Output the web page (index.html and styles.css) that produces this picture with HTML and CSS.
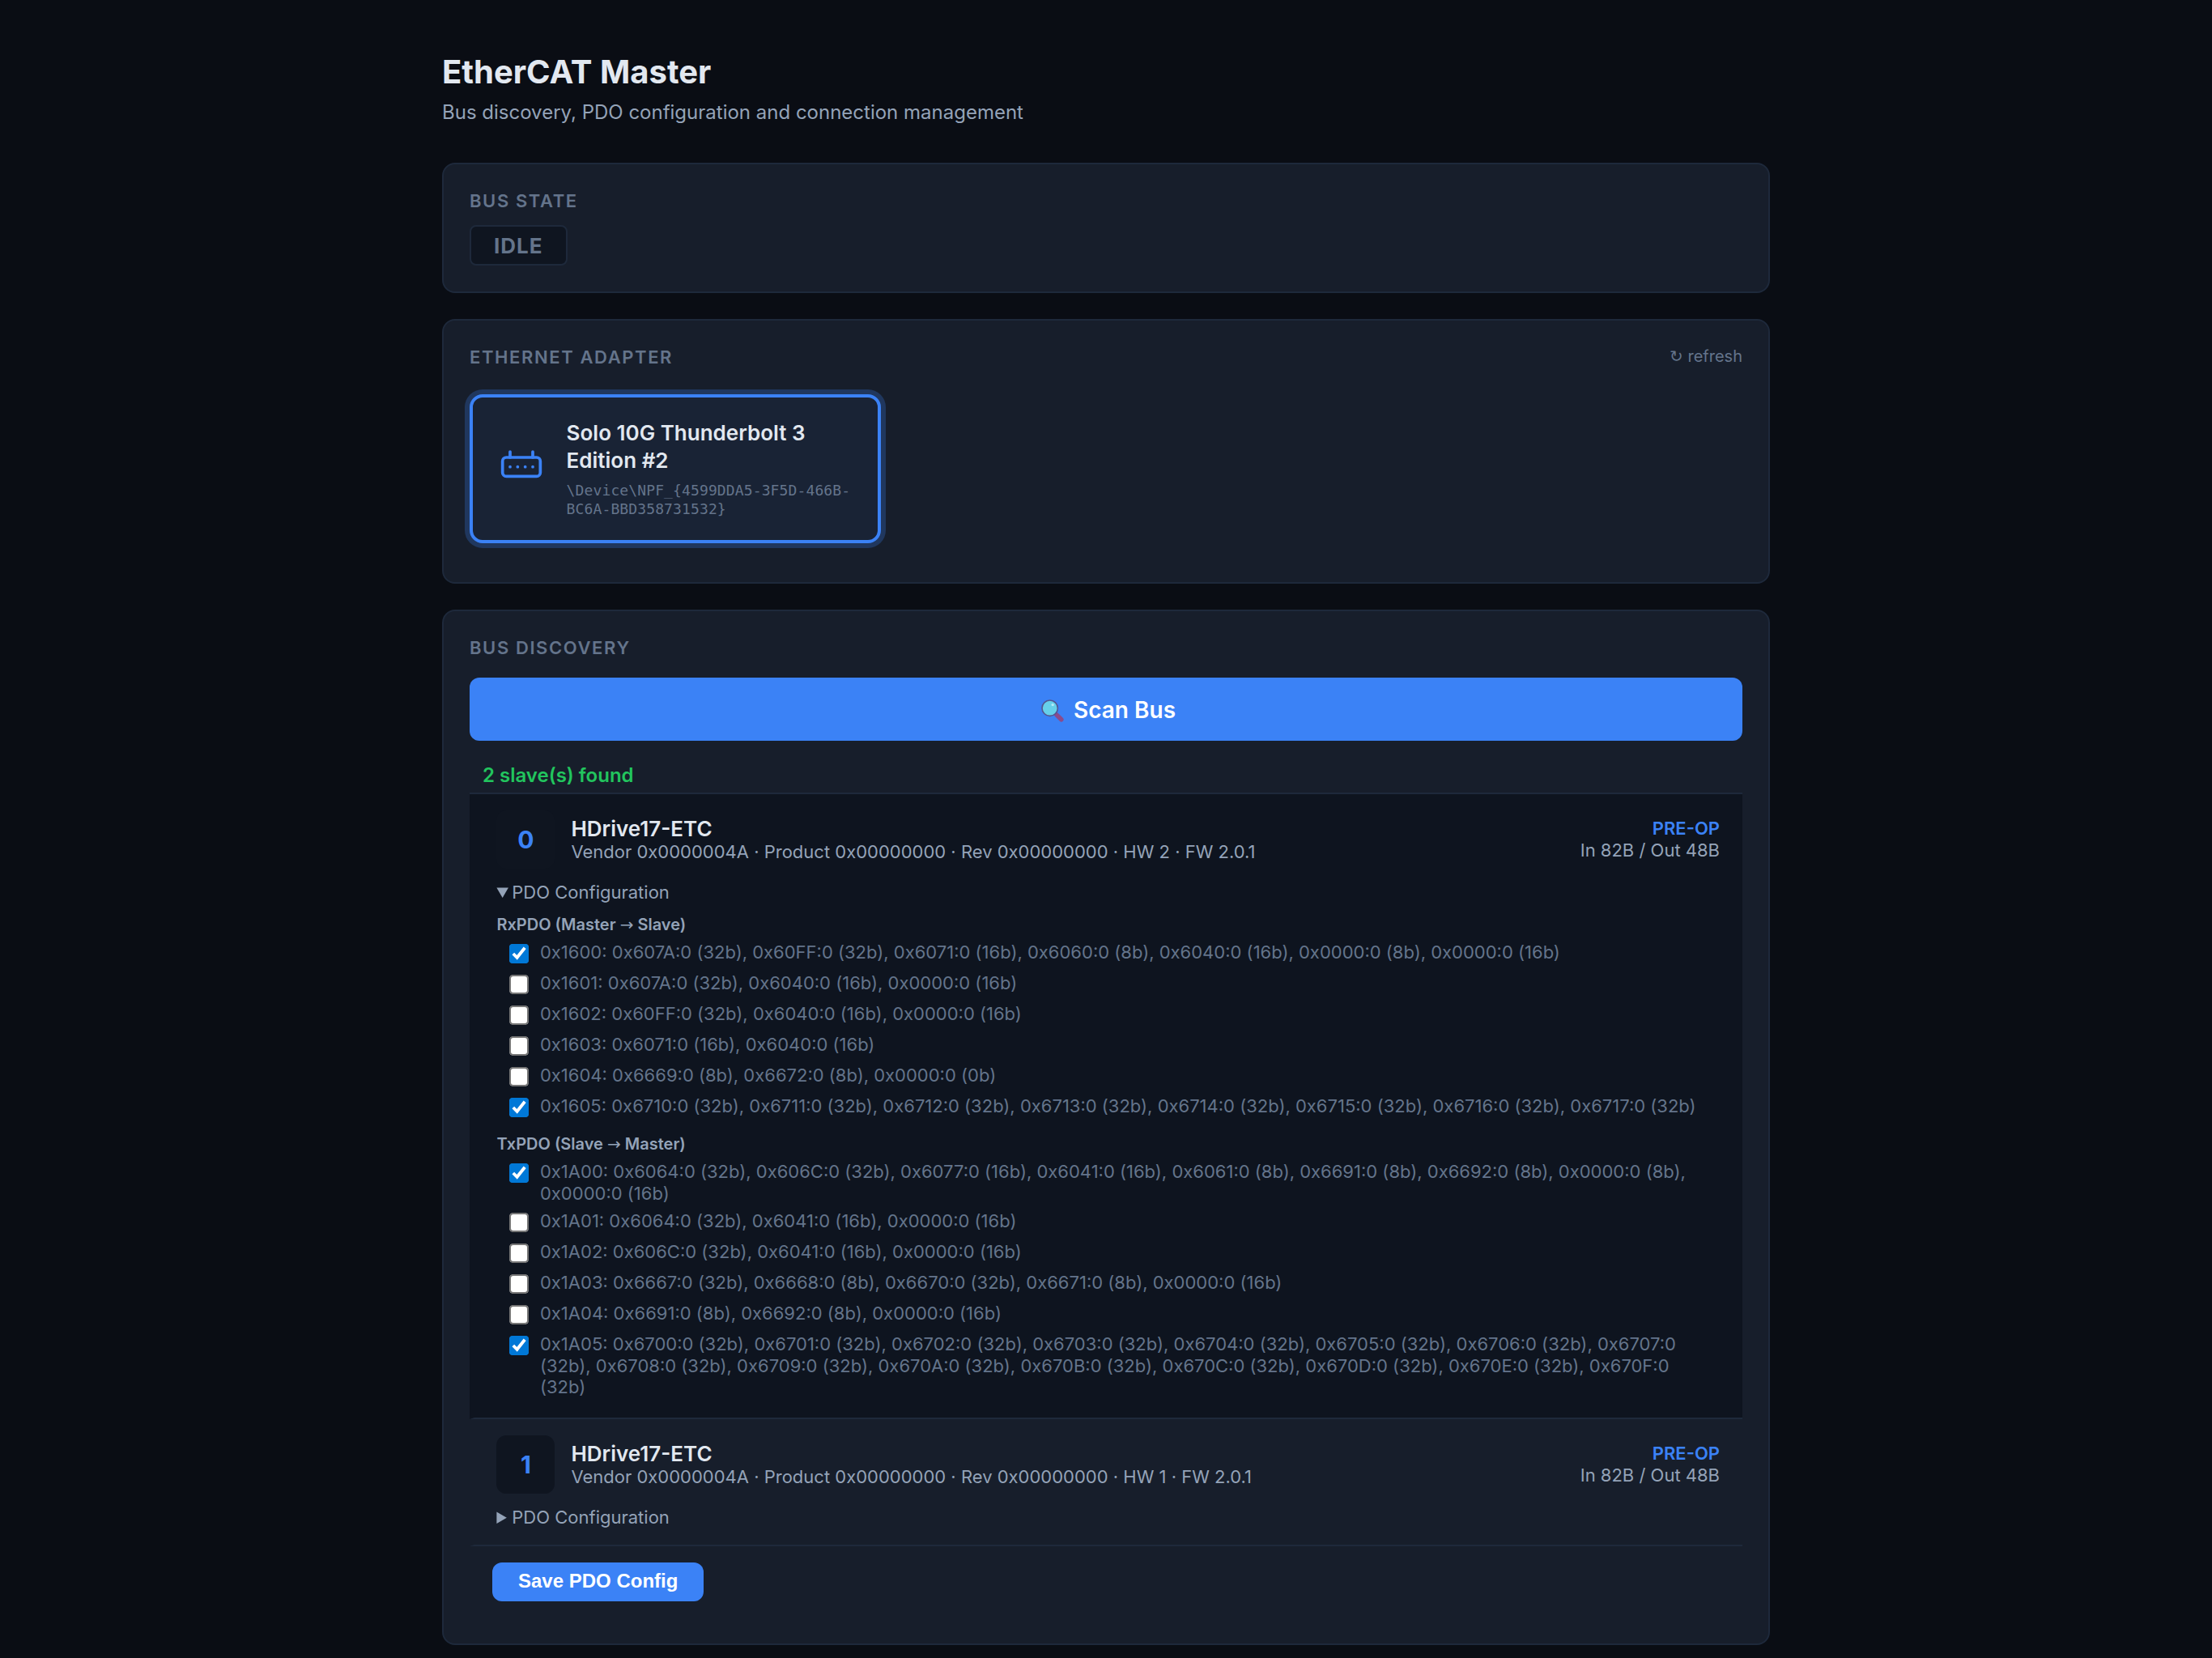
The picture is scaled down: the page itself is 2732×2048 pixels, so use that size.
FILE: index.html
```html
<!DOCTYPE html>
<html lang="en">
<head>
  <meta charset="UTF-8">
  <title>EtherCAT Master</title>
  <link rel="stylesheet" href="styles.css">
</head>
<body>

<div class="container">
  <header class="header">
    <h1>EtherCAT Master</h1>
    <p class="subtitle">Bus discovery, PDO configuration and connection management</p>
  </header>

  <section class="card">
    <div class="card-title">Bus State</div>
    <span class="state-badge">IDLE</span>
  </section>

  <section class="card">
    <div class="card-head">
      <div class="card-title">Ethernet Adapter</div>
      <button class="refresh-btn"><span class="sym">↻</span> refresh</button>
    </div>
    <div class="adapter-grid">
      <div class="adapter selected">
        <svg class="adapter-icon" viewBox="0 0 24 24" fill="none" stroke="currentColor" stroke-width="1.6" stroke-linecap="round" stroke-linejoin="round">
          <rect x="2" y="6" width="20" height="10" rx="2"/>
          <path d="M6 6V3M18 6V3M6 11h.01M10 11h.01M14 11h.01M18 11h.01"/>
        </svg>
        <div class="adapter-info">
          <div class="adapter-name">Solo 10G Thunderbolt 3 Edition #2</div>
          <div class="adapter-dev">\Device\NPF_{4599DDA5-3F5D-466B-BC6A-BBD358731532}</div>
        </div>
      </div>
    </div>
  </section>

  <section class="card">
    <div class="card-title">Bus Discovery</div>
    <button class="scan-btn">
      <svg class="scan-icon" viewBox="0 0 28 28">
        <path d="M19 19L24.8 24.8" stroke="#8a4b8c" stroke-width="5.6" stroke-linecap="round"/>
        <circle cx="10.7" cy="10.7" r="9.7" fill="#66d0ea" stroke="#54568f" stroke-width="1.6"/>
        <circle cx="14.2" cy="6.6" r="1.7" fill="#b5ecf7"/>
      </svg>
      <span>Scan Bus</span>
    </button>

    <div class="found">2 slave(s) found</div>

    <div class="slave active">
      <div class="slave-row">
        <div class="slave-idx">0</div>
        <div class="slave-info">
          <div class="slave-name">HDrive17-ETC</div>
          <div class="slave-meta">Vendor 0x0000004A · Product 0x00000000 · Rev 0x00000000 · HW 2 · FW 2.0.1</div>
        </div>
        <div class="slave-right">
          <div class="slave-state">PRE-OP</div>
          <div>In 82B / Out 48B</div>
        </div>
      </div>
      <details class="pdo" open>
        <summary>PDO Configuration</summary>
        <div class="pdo-title">RxPDO (Master <span class="sym">→</span> Slave)</div>
        <label class="pdo-item"><input type="checkbox" checked><span>0x1600: 0x607A:0 (32b), 0x60FF:0 (32b), 0x6071:0 (16b), 0x6060:0 (8b), 0x6040:0 (16b), 0x0000:0 (8b), 0x0000:0 (16b)</span></label>
        <label class="pdo-item"><input type="checkbox"><span>0x1601: 0x607A:0 (32b), 0x6040:0 (16b), 0x0000:0 (16b)</span></label>
        <label class="pdo-item"><input type="checkbox"><span>0x1602: 0x60FF:0 (32b), 0x6040:0 (16b), 0x0000:0 (16b)</span></label>
        <label class="pdo-item"><input type="checkbox"><span>0x1603: 0x6071:0 (16b), 0x6040:0 (16b)</span></label>
        <label class="pdo-item"><input type="checkbox"><span>0x1604: 0x6669:0 (8b), 0x6672:0 (8b), 0x0000:0 (0b)</span></label>
        <label class="pdo-item"><input type="checkbox" checked><span>0x1605: 0x6710:0 (32b), 0x6711:0 (32b), 0x6712:0 (32b), 0x6713:0 (32b), 0x6714:0 (32b), 0x6715:0 (32b), 0x6716:0 (32b), 0x6717:0 (32b)</span></label>
        <div class="pdo-title">TxPDO (Slave <span class="sym">→</span> Master)</div>
        <label class="pdo-item"><input type="checkbox" checked><span>0x1A00: 0x6064:0 (32b), 0x606C:0 (32b), 0x6077:0 (16b), 0x6041:0 (16b), 0x6061:0 (8b), 0x6691:0 (8b), 0x6692:0 (8b), 0x0000:0 (8b), 0x0000:0 (16b)</span></label>
        <label class="pdo-item"><input type="checkbox"><span>0x1A01: 0x6064:0 (32b), 0x6041:0 (16b), 0x0000:0 (16b)</span></label>
        <label class="pdo-item"><input type="checkbox"><span>0x1A02: 0x606C:0 (32b), 0x6041:0 (16b), 0x0000:0 (16b)</span></label>
        <label class="pdo-item"><input type="checkbox"><span>0x1A03: 0x6667:0 (32b), 0x6668:0 (8b), 0x6670:0 (32b), 0x6671:0 (8b), 0x0000:0 (16b)</span></label>
        <label class="pdo-item"><input type="checkbox"><span>0x1A04: 0x6691:0 (8b), 0x6692:0 (8b), 0x0000:0 (16b)</span></label>
        <label class="pdo-item"><input type="checkbox" checked><span>0x1A05: 0x6700:0 (32b), 0x6701:0 (32b), 0x6702:0 (32b), 0x6703:0 (32b), 0x6704:0 (32b), 0x6705:0 (32b), 0x6706:0 (32b), 0x6707:0 (32b), 0x6708:0 (32b), 0x6709:0 (32b), 0x670A:0 (32b), 0x670B:0 (32b), 0x670C:0 (32b), 0x670D:0 (32b), 0x670E:0 (32b), 0x670F:0 (32b)</span></label>
      </details>
    </div>

    <div class="slave">
      <div class="slave-row">
        <div class="slave-idx">1</div>
        <div class="slave-info">
          <div class="slave-name">HDrive17-ETC</div>
          <div class="slave-meta">Vendor 0x0000004A · Product 0x00000000 · Rev 0x00000000 · HW 1 · FW 2.0.1</div>
        </div>
        <div class="slave-right">
          <div class="slave-state">PRE-OP</div>
          <div>In 82B / Out 48B</div>
        </div>
      </div>
      <details class="pdo">
        <summary>PDO Configuration</summary>
      </details>
    </div>

    <div class="save-row">
      <button class="save-btn">Save PDO Config</button>
    </div>
  </section>
</div>

</body>
</html>
```

FILE: styles.css
```css
:root {
  --bg: #0a0d14;
  --card: #171e2b;
  --dark: #0e141f;
  --border: #1e293b;
  --text: #e2e8f0;
  --text2: #94a3b8;
  --muted: #64748b;
  --accent: #3b82f6;
  --green: #22c55e;
}

* { box-sizing: border-box; margin: 0; padding: 0; }
html { zoom: 2; overflow: hidden; }
body { font-family: Inter, "Liberation Sans", sans-serif; line-height: 1.21; background: var(--bg); color: var(--text); }
button { font-family: inherit; line-height: inherit; border: none; cursor: pointer; }
.sym { font-family: "DejaVu Sans", sans-serif; font-weight: 400; line-height: 1; }

.container { width: 820px; margin: 0 auto; padding-top: 32.5px; }
.header { margin-bottom: 24px; }
h1 { font-size: 20px; font-weight: 700; margin-bottom: 5.5px; }
.subtitle { font-size: 12px; color: var(--text2); }

.card { background: var(--card); border: 1px solid var(--border); border-radius: 8px; padding: 16px; margin-bottom: 16px; }
.card-title { font-size: 11px; font-weight: 600; letter-spacing: 0.8px; text-transform: uppercase; color: var(--muted); margin-bottom: 8px; }
.card-head { display: flex; justify-content: space-between; align-items: flex-start; }
.refresh-btn { background: none; color: var(--muted); font-size: 10px; }

.state-badge { display: block; width: fit-content; background: #0f1520; border: 1px solid var(--border); border-radius: 4px; padding: 3.75px 14px; font-size: 13px; font-weight: 700; letter-spacing: 0.5px; color: var(--muted); }

/* adapters */
.adapter-grid { display: grid; grid-template-columns: repeat(3, 1fr); gap: 12px; margin: 8px 0; }
.adapter { display: flex; align-items: center; gap: 14px; padding: 13.5px 15.5px 13.5px 15.8px; border: 2px solid var(--border); border-radius: 8px; }
.adapter.selected { border-color: var(--accent); background: #192335; box-shadow: 0 0 0 3px rgba(59, 130, 246, 0.25); }
.adapter-icon { width: 28px; height: 28px; flex-shrink: 0; color: var(--accent); }
.adapter-name { font-size: 13px; font-weight: 600; line-height: 1.3; }
.adapter-dev { font-family: "DejaVu Sans Mono", monospace; font-size: 9px; letter-spacing: 0.06px; line-height: 1.3; color: var(--muted); margin-top: 4px; word-break: break-word; }

/* discovery */
.scan-btn { display: flex; justify-content: center; align-items: center; gap: 6px; width: 100%; margin-top: 11.5px; padding: 12px 10px 10px; background: var(--accent); color: #fff; border-radius: 6px; font-size: 14px; font-weight: 600; }
.scan-icon { width: 14px; height: 14px; margin-left: 3px; }
.found { margin-top: 14px; padding: 0 8px 3.5px; font-size: 12px; font-weight: 600; color: var(--green); border-bottom: 1px solid var(--border); }

.slave { padding: 10px 14px 10px 13.7px; border-left: 3px solid transparent; border-bottom: 1px solid var(--border); }
.slave.active { background: var(--dark); }
.slave-row { display: flex; align-items: center; gap: 10px; }
.slave-idx { display: flex; align-items: center; justify-content: center; width: 36px; height: 36px; background: #0f1520; border-radius: 6px; font-size: 15px; font-weight: 700; color: var(--accent); }
.slave-info { flex: 1; }
.slave-name { font-size: 13px; font-weight: 600; }
.slave-meta { font-size: 11px; color: var(--text2); }
.slave-right { font-size: 11px; color: var(--text2); text-align: right; }
.slave-state { font-weight: 600; color: var(--accent); }

.pdo { margin-top: 8px; font-size: 11px; color: var(--text2); }
.pdo-title { font-size: 10px; font-weight: 600; margin: 7px 0 2.5px; }
.pdo-item { display: flex; align-items: flex-start; gap: 6.8px; padding: 2px 4px 2px 8px; color: var(--muted); }
.pdo-item input { width: 12px; height: 12px; margin: 1.5px 0; flex-shrink: 0; accent-color: #0078d7; }

.save-row { padding: 10px 14px; }
.save-btn { display: block; background: var(--accent); color: #fff; border-radius: 6px; padding: 4.7px 16px 5.3px; font-family: "Liberation Sans", sans-serif; font-size: 12px; font-weight: 700; line-height: 14px; }
```
